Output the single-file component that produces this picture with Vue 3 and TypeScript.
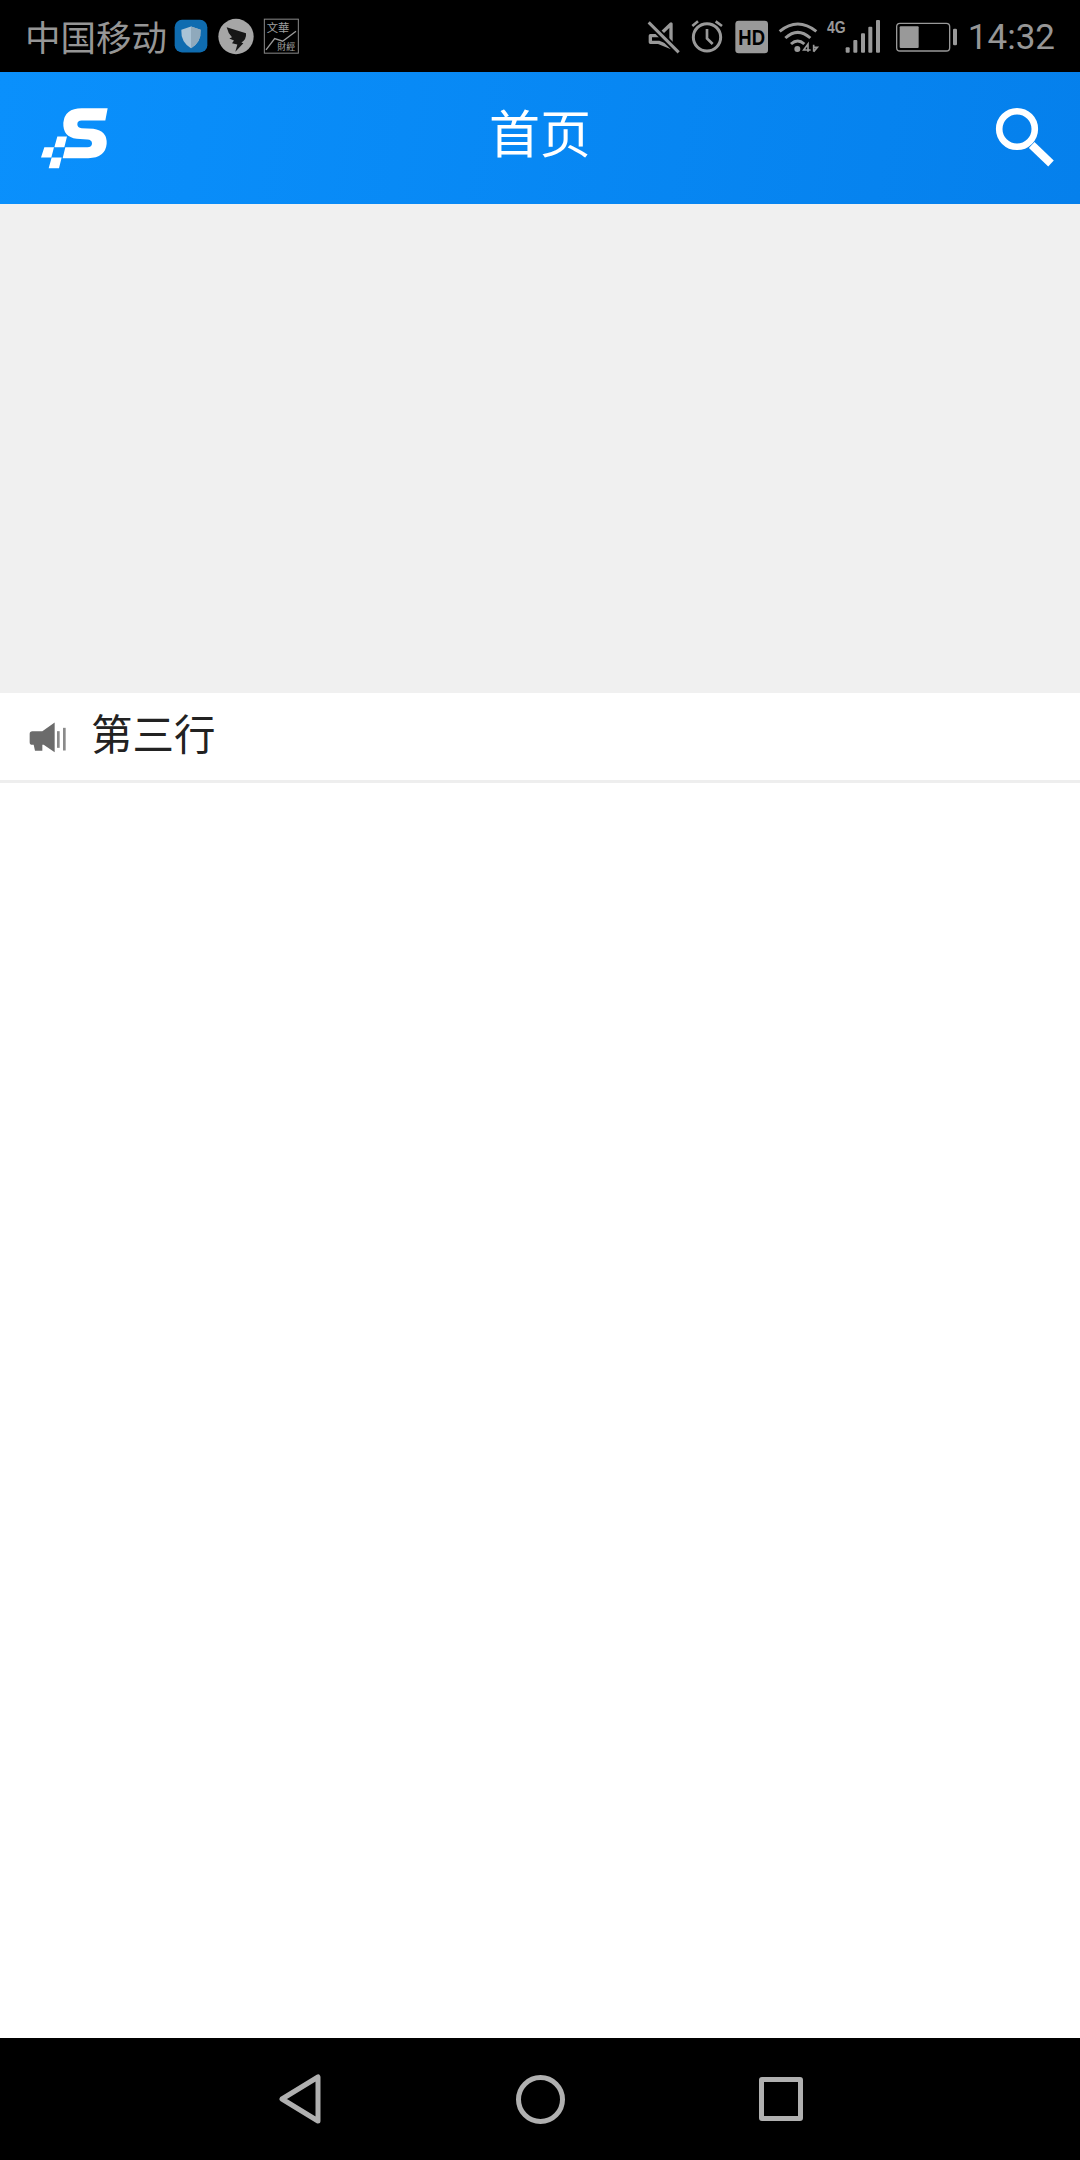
<script setup lang="ts">
const title = "首页";
const notice = "第三行";
</script>

<template>
  <div class="page">
    <div class="status-bar">
      <div class="status-left">
        <span class="carrier">中国移动</span>
        <svg class="notify-icons" viewBox="520 55 375 110">
          <!-- shield app -->
          <rect x="522" y="60" width="98" height="98" rx="22" fill="#0f6cb0" />
          <path d="M571 80 L600 90 Q602 128 571 145 Q540 128 542 90 Z" fill="#a9c3d6" />
          <path d="M571 80 L600 90 Q602 128 571 145 Z" fill="#8fa9bc" />
          <!-- wing app -->
          <circle cx="706" cy="110" r="53" fill="#a6a6a6" />
          <path d="M678 82 L736 100 Q738 118 722 128 L728 130 L704 156 L710 134 L694 130 L700 122 L686 116 L694 112 Q682 100 678 82 Z" fill="#161616" />
          <!-- news app -->
          <rect x="791" y="58" width="102" height="102" fill="none" stroke="#8a8a8a" stroke-width="3" />
          <text x="798" y="96" class="tiny" font-size="34">文華</text>
          <text x="830" y="150" class="tiny" font-size="27">財經</text>
          <path d="M796 150 L822 116 L846 124 L886 94" fill="none" stroke="#9a9a9a" stroke-width="4" />
        </svg>
      </div>
      <div class="status-right">
        <svg class="sys-icons" viewBox="50 25 930 165">
          <!-- muted -->
          <path d="M60 105 L85 105 L122 70 L122 140 L85 125 L60 125 Z" fill="none" stroke="#999" stroke-width="10" stroke-linejoin="round" />
          <path d="M55 65 L145 155" stroke="#000" stroke-width="20" />
          <path d="M55 65 L145 155" stroke="#999" stroke-width="9" />
          <!-- alarm -->
          <circle cx="230" cy="110" r="41" fill="none" stroke="#999" stroke-width="9" />
          <path d="M230 85 L230 113 L247 130 M186 76 L203 62 M256 62 L275 76" fill="none" stroke="#999" stroke-width="8" />
          <!-- HD -->
          <rect x="315" y="60" width="98" height="98" rx="10" fill="#999" />
          <text x="324" y="133" class="hd" font-size="66" textLength="80" lengthAdjust="spacingAndGlyphs">HD</text>
          <!-- wifi -->
          <path d="M448 92 Q502 48 558 92 M465 112 Q502 78 540 112 M482 130 Q502 112 522 130" fill="none" stroke="#999" stroke-width="9" />
          <circle cx="501" cy="145" r="9" fill="#999" />
          <path d="M533 153 L533 130 L520 148 L541 148 M550 132 L550 153 M550 153 L561 140 L550 140" fill="none" stroke="#999" stroke-width="5" />
          <!-- 4G + signal -->
          <text x="590" y="97" class="fourg" font-size="52" textLength="56" lengthAdjust="spacingAndGlyphs">4G</text>
          <rect x="646" y="140" width="12" height="16" rx="3" fill="#999" />
          <rect x="669" y="118" width="12" height="38" rx="3" fill="#999" />
          <rect x="692" y="98" width="12" height="58" rx="3" fill="#999" />
          <rect x="714" y="78" width="12" height="78" rx="3" fill="#999" />
          <rect x="737" y="58" width="12" height="98" rx="3" fill="#999" />
          <!-- battery -->
          <rect x="799" y="68" width="159" height="83" rx="10" fill="none" stroke="#999" stroke-width="4" />
          <rect x="808" y="77" width="57" height="65" rx="3" fill="#999" />
          <rect x="968" y="84" width="12" height="50" rx="4" fill="#999" />
        </svg>
        <span class="clock">14:32</span>
      </div>
    </div>

    <header class="nav-bar">
      <svg class="logo" viewBox="120 115 210 185">
        <path d="M323 118 L316 155 L245 155 Q232 155 232 166 Q232 176 245 178 L280 180 Q322 186 320 225 Q316 268 265 268 L188 268 L196 235 L262 235 Q276 235 276 224 Q276 213 262 212 L230 210 Q188 205 190 162 Q194 118 245 118 Z" fill="#fff" />
        <path d="M172 203 L201 203 L193 235 L163 235 Z M133 235 L162 235 L154 266 L123 266 Z M155 266 L185 266 L177 298 L146 298 Z" fill="#fff" />
      </svg>
      <h1 class="title">{{ title }}</h1>
      <svg class="search" viewBox="0 0 64 64">
        <circle cx="27" cy="23" r="17.8" fill="none" stroke="#fff" stroke-width="6.6" />
        <path d="M41.7 39 L61 57.5" stroke="#fff" stroke-width="8" />
      </svg>
    </header>

    <div class="banner"></div>

    <div class="notice">
      <svg class="speaker" viewBox="85 125 120 95">
        <path d="M98 155 L128 155 L165 129 L165 218 L132 196 L128 196 L128 214 L106 214 L102 196 L98 196 Q90 196 90 188 L90 163 Q90 155 98 155 Z" fill="#6b6b6b" />
        <rect x="172" y="155" width="8" height="50" fill="#8a8a8a" />
        <rect x="190" y="145" width="8" height="68" fill="#8a8a8a" />
      </svg>
      <span class="notice-text">{{ notice }}</span>
    </div>

    <main class="content"></main>

    <footer class="sys-nav">
      <svg class="nav-back" viewBox="0 0 44 50">
        <path d="M4 25 L40 3 L40 47 Z" fill="none" stroke="#b0b0b0" stroke-width="5" stroke-linejoin="round" />
      </svg>
      <div class="nav-home"></div>
      <div class="nav-recent"></div>
    </footer>
  </div>
</template>

<style>
body {
  margin: 0;
  background: #fff;
}
</style>

<style scoped>
.page {
  display: flex;
  flex-direction: column;
  width: 1080px;
  height: 2160px;
  font-family: "Noto Sans CJK SC", "Liberation Sans", sans-serif;
}

.status-bar {
  display: flex;
  align-items: center;
  justify-content: space-between;
  flex: none;
  height: 72px;
  padding: 0 25px;
  box-sizing: border-box;
  background: #000;
  color: #969696;
}

.status-left,
.status-right {
  display: flex;
  align-items: center;
}

.carrier {
  font-size: 35.5px;
  line-height: 72px;
}

.notify-icons {
  width: 125px;
  height: 37px;
  margin-left: 7px;
}

.sys-icons {
  width: 310px;
  height: 55px;
}

.tiny {
  fill: #a0a0a0;
  font-family: "Noto Sans CJK TC", sans-serif;
}

.hd {
  fill: #000;
  font-family: "Liberation Sans", sans-serif;
  font-weight: 700;
}

.fourg {
  fill: #999;
  font-family: "Liberation Sans", sans-serif;
  font-weight: 700;
}

.clock {
  margin-left: 11px;
  padding-top: 3px;
  font-family: Roboto, sans-serif;
  font-size: 35px;
  line-height: 69px;
}

.nav-bar {
  display: grid;
  grid-template-columns: 1fr auto 1fr;
  align-items: center;
  flex: none;
  height: 132px;
  padding: 0 26px;
  box-sizing: border-box;
  background: linear-gradient(100deg, #0a90fc, #0580ec);
  color: #fff;
}

.logo {
  width: 70px;
  height: 62px;
  margin-left: 14px;
}

.title {
  margin: 0 0 14px;
  font-size: 51px;
  font-weight: 400;
  line-height: 118px;
}

.search {
  justify-self: end;
  width: 64px;
  height: 64px;
}

.banner {
  flex: none;
  height: 489px;
  background: #f0f0f0;
}

.notice {
  display: flex;
  align-items: center;
  flex: none;
  height: 90px;
  padding-left: 28px;
  box-sizing: border-box;
  border-bottom: 3px solid #eeeeee;
  color: #222;
}

.speaker {
  width: 40px;
  height: 32px;
}

.notice-text {
  margin: 0 0 8px 23px;
  font-size: 41.5px;
  line-height: 79px;
}

.content {
  flex: 1;
  background: #fff;
}

.sys-nav {
  display: flex;
  align-items: center;
  justify-content: center;
  gap: 194px;
  flex: none;
  height: 122px;
  box-sizing: border-box;
  background: #000;
}

.nav-back {
  width: 44px;
  height: 50px;
}

.nav-home {
  width: 49px;
  height: 49px;
  box-sizing: border-box;
  border: 5px solid #b0b0b0;
  border-radius: 50%;
}

.nav-recent {
  width: 44px;
  height: 44px;
  box-sizing: border-box;
  border: 5px solid #b0b0b0;
  border-radius: 3px;
}
</style>
